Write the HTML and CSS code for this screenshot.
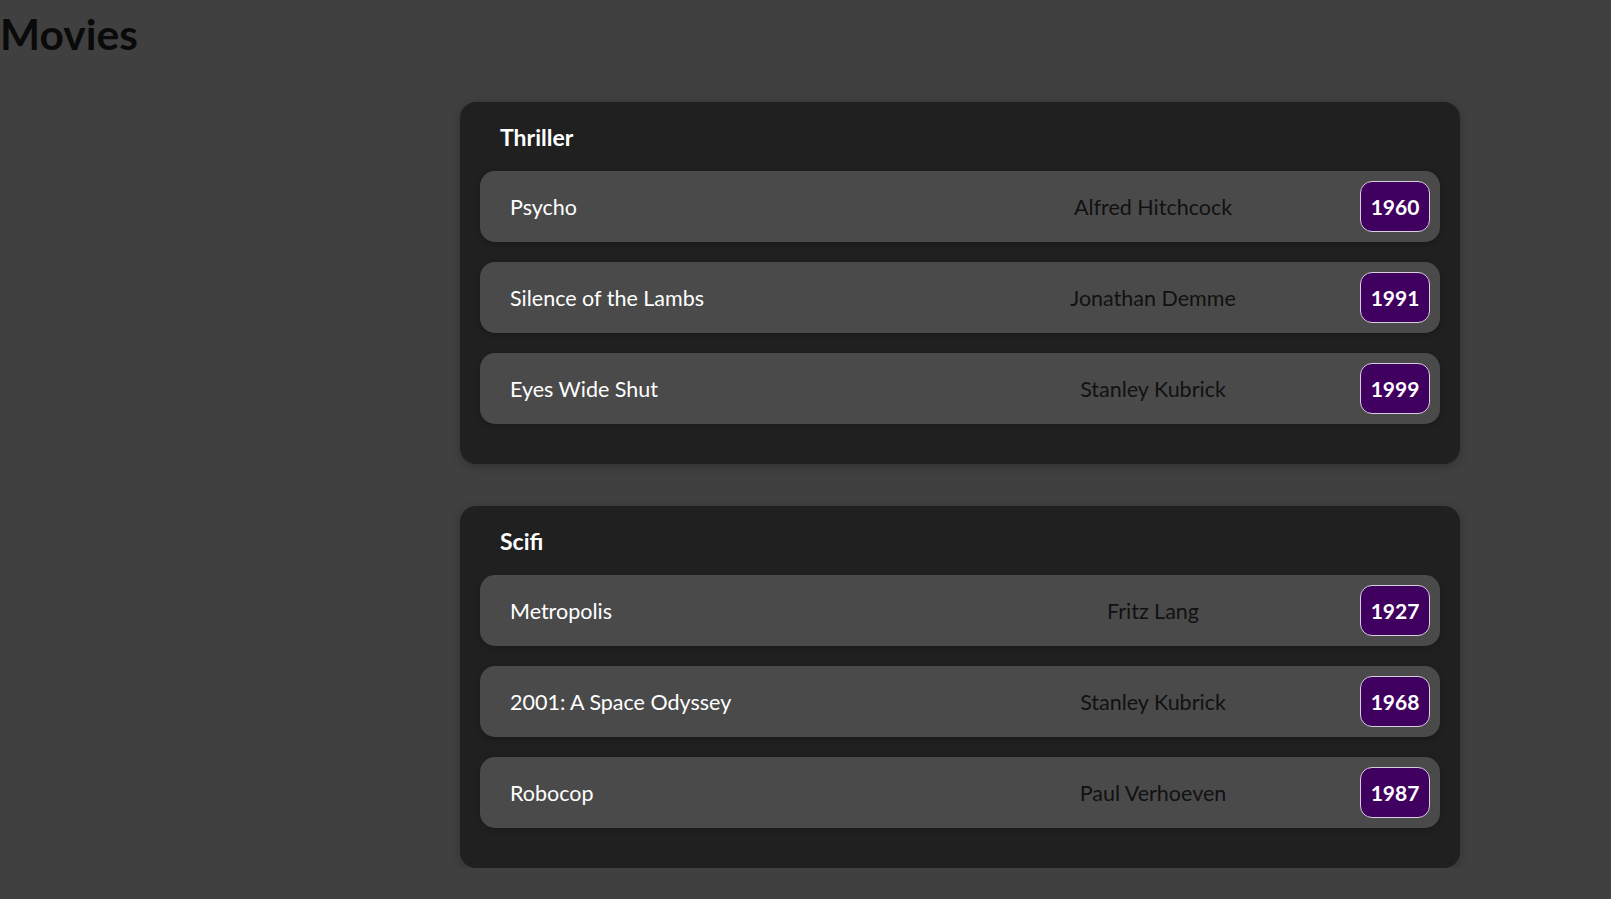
FILE: index.html
```html
<!DOCTYPE html>
<html lang="en">
<head>
<meta charset="utf-8">
<title>Movies</title>
<link rel="stylesheet" href="styles.css">
</head>
<body>
<h1 class="page-title">Movies</h1>
<main class="genres">
  <section class="genre">
    <h2 class="genre-title">Thriller</h2>
    <ul class="movie-list">
      <li class="movie"><span class="movie-title">Psycho</span><span class="movie-director">Alfred Hitchcock</span><span class="movie-year">1960</span></li>
      <li class="movie"><span class="movie-title">Silence of the Lambs</span><span class="movie-director">Jonathan Demme</span><span class="movie-year">1991</span></li>
      <li class="movie"><span class="movie-title">Eyes Wide Shut</span><span class="movie-director">Stanley Kubrick</span><span class="movie-year">1999</span></li>
    </ul>
  </section>
  <section class="genre">
    <h2 class="genre-title">Scifi</h2>
    <ul class="movie-list">
      <li class="movie"><span class="movie-title">Metropolis</span><span class="movie-director">Fritz Lang</span><span class="movie-year">1927</span></li>
      <li class="movie"><span class="movie-title">2001: A Space Odyssey</span><span class="movie-director">Stanley Kubrick</span><span class="movie-year">1968</span></li>
      <li class="movie"><span class="movie-title">Robocop</span><span class="movie-director">Paul Verhoeven</span><span class="movie-year">1987</span></li>
    </ul>
  </section>
</main>
</body>
</html>
```
FILE: styles.css
```css
html, body {
  margin: 0;
  padding: 0;
}
body {
  background: #404040;
  font-family: Lato, "Noto Sans", sans-serif;
  color: #fff;
}
.page-title {
  margin: 0;
  padding: 6px 0 0 0;
  font-size: 42.5px;
  line-height: 56px;
  font-weight: 700;
  color: #0a0a0a;
}
.genres {
  margin: 40px 0 0 460px;
  width: 1000px;
  display: flex;
  flex-direction: column;
  gap: 42px;
}
.genre {
  background: #202020;
  border-radius: 16px;
  padding: 20px 20px 40px;
  box-shadow: 0 2px 10px rgba(0, 0, 0, 0.25);
}
.genre-title {
  margin: 0;
  padding: 2px 20px 21px;
  font-size: 23px;
  line-height: 26px;
  font-weight: 700;
  color: #fff;
}
.movie-list {
  list-style: none;
  margin: 0;
  padding: 0;
  display: flex;
  flex-direction: column;
  gap: 20px;
}
.movie {
  display: grid;
  grid-template-columns: 436fr 414fr auto;
  align-items: center;
  background: #4a4a4a;
  border-radius: 15px;
  padding: 10px 10px 10px 30px;
  box-shadow: 0 2px 6px rgba(0, 0, 0, 0.2);
  font-size: 21.5px;
}
.movie-title {
  color: #fff;
}
.movie-director {
  text-align: center;
  color: #111;
}
.movie-year {
  box-sizing: border-box;
  width: 70px;
  height: 51px;
  display: flex;
  align-items: center;
  justify-content: center;
  background: #400060;
  border: 1px solid #d8d0dc;
  border-radius: 12px;
  font-size: 21px;
  font-weight: 700;
  color: #fff;
}
```
